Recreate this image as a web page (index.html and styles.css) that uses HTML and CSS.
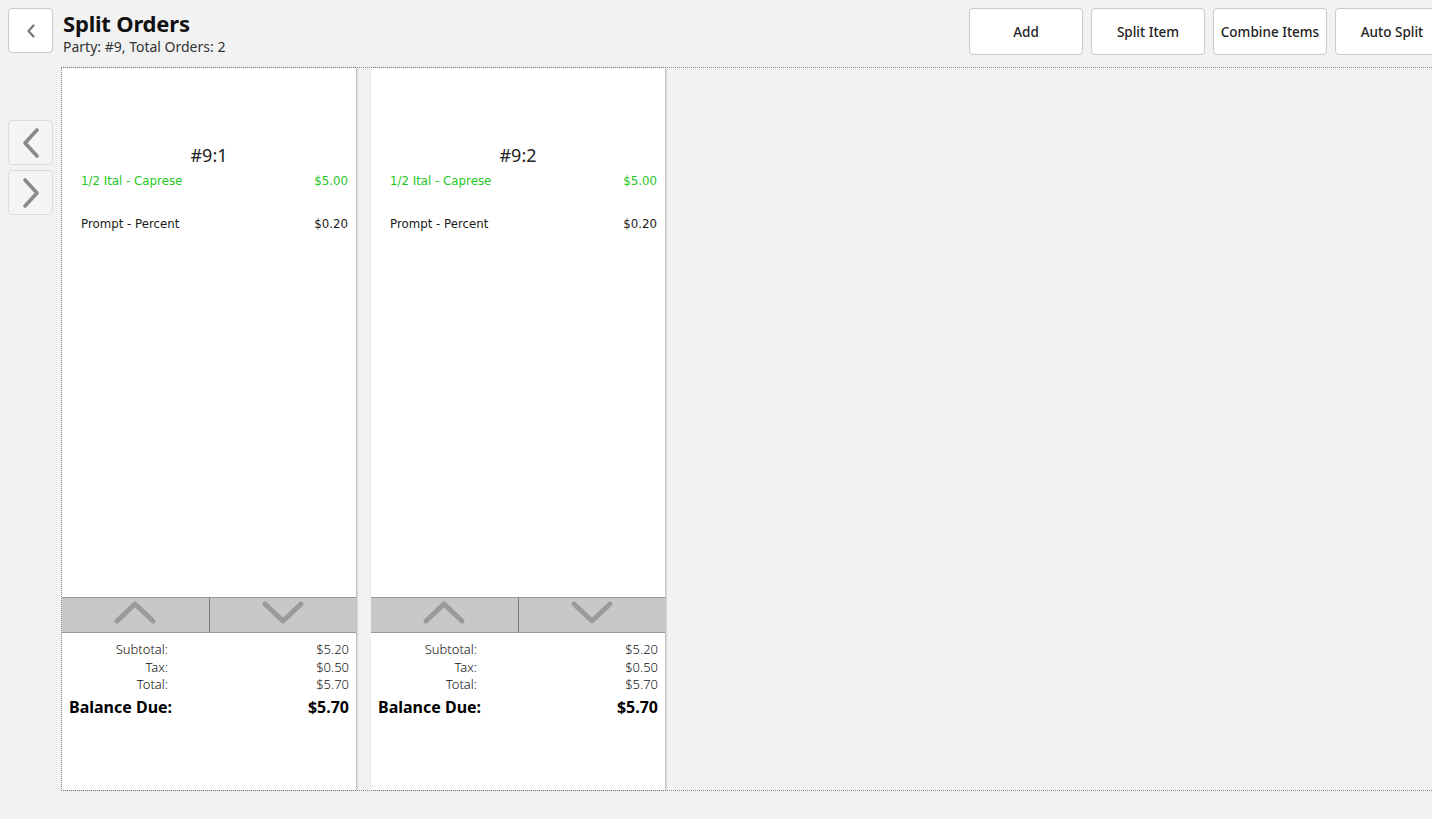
FILE: index.html
```html
<!DOCTYPE html>
<html lang="en">
<head>
  <meta charset="UTF-8">
  <meta name="viewport" content="width=device-width, initial-scale=1.0">
  <title>Split Orders</title>
  <link rel="stylesheet" href="styles.css">
</head>
<body>
  <header class="top-bar">
    <button class="back-btn" aria-label="Back">
      <svg width="10" height="14" viewBox="0 0 10 14"><path d="M7.5 1.5 L2.5 7 L7.5 12.5" fill="none" stroke="#777" stroke-width="2.2" stroke-linecap="round" stroke-linejoin="round"/></svg>
    </button>
    <div class="title-block">
      <h1>Split Orders</h1>
      <div class="subtitle">Party: #9, Total Orders: 2</div>
    </div>
    <div class="actions">
      <button class="action-btn">Add</button>
      <button class="action-btn">Split Item</button>
      <button class="action-btn">Combine Items</button>
      <button class="action-btn">Auto Split</button>
    </div>
  </header>

  <main class="workspace">
    <nav class="pager">
      <button class="pager-btn" aria-label="Previous">
        <svg width="20" height="32" viewBox="0 0 20 32"><path d="M16 3 L4 16 L16 29" fill="none" stroke="#8a8a8a" stroke-width="3.6" stroke-linecap="round" stroke-linejoin="round"/></svg>
      </button>
      <button class="pager-btn" aria-label="Next">
        <svg width="20" height="32" viewBox="0 0 20 32"><path d="M4 3 L16 16 L4 29" fill="none" stroke="#8a8a8a" stroke-width="3.6" stroke-linecap="round" stroke-linejoin="round"/></svg>
      </button>
    </nav>

    <section class="board">
      <div class="check">
        <div class="check-title">#9:1</div>
        <div class="items">
          <div class="item sent"><span>1/2 Ital - Caprese</span><span>$5.00</span></div>
          <div class="item"><span>Prompt - Percent</span><span>$0.20</span></div>
        </div>
        <div class="scroller">
          <button class="scroll-btn" aria-label="Scroll up">
            <svg width="44" height="26" viewBox="0 0 44 26"><path d="M4 22 L22 5 L40 22" fill="none" stroke="#9a9a9a" stroke-width="5" stroke-linecap="round" stroke-linejoin="round"/></svg>
          </button>
          <button class="scroll-btn" aria-label="Scroll down">
            <svg width="44" height="26" viewBox="0 0 44 26"><path d="M4 5 L22 22 L40 5" fill="none" stroke="#9a9a9a" stroke-width="5" stroke-linecap="round" stroke-linejoin="round"/></svg>
          </button>
        </div>
        <div class="totals">
          <span class="t-label">Subtotal:</span><span class="t-value">$5.20</span>
          <span class="t-label">Tax:</span><span class="t-value">$0.50</span>
          <span class="t-label">Total:</span><span class="t-value">$5.70</span>
          <span class="due-label">Balance Due:</span><span class="due-value">$5.70</span>
        </div>
      </div>

      <div class="check">
        <div class="check-title">#9:2</div>
        <div class="items">
          <div class="item sent"><span>1/2 Ital - Caprese</span><span>$5.00</span></div>
          <div class="item"><span>Prompt - Percent</span><span>$0.20</span></div>
        </div>
        <div class="scroller">
          <button class="scroll-btn" aria-label="Scroll up">
            <svg width="44" height="26" viewBox="0 0 44 26"><path d="M4 22 L22 5 L40 22" fill="none" stroke="#9a9a9a" stroke-width="5" stroke-linecap="round" stroke-linejoin="round"/></svg>
          </button>
          <button class="scroll-btn" aria-label="Scroll down">
            <svg width="44" height="26" viewBox="0 0 44 26"><path d="M4 5 L22 22 L40 5" fill="none" stroke="#9a9a9a" stroke-width="5" stroke-linecap="round" stroke-linejoin="round"/></svg>
          </button>
        </div>
        <div class="totals">
          <span class="t-label">Subtotal:</span><span class="t-value">$5.20</span>
          <span class="t-label">Tax:</span><span class="t-value">$0.50</span>
          <span class="t-label">Total:</span><span class="t-value">$5.70</span>
          <span class="due-label">Balance Due:</span><span class="due-value">$5.70</span>
        </div>
      </div>
    </section>
  </main>
</body>
</html>
```

FILE: styles.css
```css
* {
  margin: 0;
  padding: 0;
  box-sizing: border-box;
}
html, body {
  height: 100%;
  overflow: hidden;
}
body {
  font-family: "Noto Sans", "Open Sans", sans-serif;
  background-color: #f2f2f2;
  color: #111;
}
button {
  font-family: inherit;
  cursor: pointer;
}

/* header */
.top-bar {
  display: flex;
  align-items: flex-start;
  height: 67px;
  padding: 8px 0 0 8px;
}
.back-btn {
  width: 45px;
  height: 45px;
  background-color: #fff;
  border: 1px solid #c9c9c9;
  border-radius: 4px;
  display: flex;
  align-items: center;
  justify-content: center;
}
.title-block {
  margin-left: 10px;
  margin-top: 1px;
}
h1 {
  font-size: 22px;
  font-weight: 700;
  line-height: 28px;
  letter-spacing: -0.2px;
}
.subtitle {
  font-size: 14px;
  line-height: 20px;
  color: #333;
}
.actions {
  margin-left: auto;
  display: flex;
  gap: 8px;
  margin-right: -17px;
}
.action-btn {
  width: 114px;
  height: 47px;
  background-color: #fff;
  border: 1px solid #c9c9c9;
  border-radius: 4px;
  font-size: 13.5px;
  font-weight: 500;
  color: #222;
}

/* main area */
.workspace {
  display: flex;
  height: 724px;
}
.pager {
  width: 61px;
  padding: 53px 0 0 8px;
  display: flex;
  flex-direction: column;
  gap: 5px;
}
.pager-btn {
  width: 45px;
  height: 45px;
  background-color: #f4f4f4;
  border: 1px solid #dcdcdc;
  border-radius: 4px;
  display: flex;
  align-items: center;
  justify-content: center;
}
.board {
  flex: 1;
  display: flex;
  gap: 15px;
  border: 1px dotted #8c8c8c;
  border-right: none;
}

/* check card */
.check {
  width: 294px;
  background-color: #fff;
  display: flex;
  flex-direction: column;
  box-shadow: 1px 0 2px rgba(0, 0, 0, 0.28);
}
.check-title {
  text-align: center;
  font-size: 18px;
  line-height: 22px;
  padding-top: 76px;
  color: #222;
}
.items {
  flex: 1;
  padding: 8px 8px 0 19px;
  font-family: "DejaVu Sans", Verdana, sans-serif;
  font-size: 11.8px;
}
.item {
  display: flex;
  justify-content: space-between;
  height: 43px;
  line-height: 14px;
  color: #1a1a1a;
}
.item.sent {
  color: #1ec81e;
}
.scroller {
  display: flex;
  height: 36px;
  background-color: #c8c8c8;
  border-top: 1px solid #9a9a9a;
  border-bottom: 1px solid #9a9a9a;
}
.scroll-btn {
  flex: 1;
  background: none;
  border: none;
  display: flex;
  align-items: flex-start;
  justify-content: center;
  padding-top: 1px;
}
.scroll-btn + .scroll-btn {
  border-left: 1px solid #7d7d7d;
}
.totals {
  display: grid;
  grid-template-columns: 99px 1fr;
  padding: 8px 7px 0 7px;
  height: 157px;
  align-content: start;
  font-size: 13px;
  line-height: 17.5px;
  color: #111;
}
.t-label,
.t-value {
  text-align: right;
  font-weight: 300;
}
.due-label,
.due-value {
  font-size: 16px;
  font-weight: 700;
  line-height: 27px;
  color: #000;
}
.due-label {
  white-space: nowrap;
}
.due-value {
  text-align: right;
}
```
